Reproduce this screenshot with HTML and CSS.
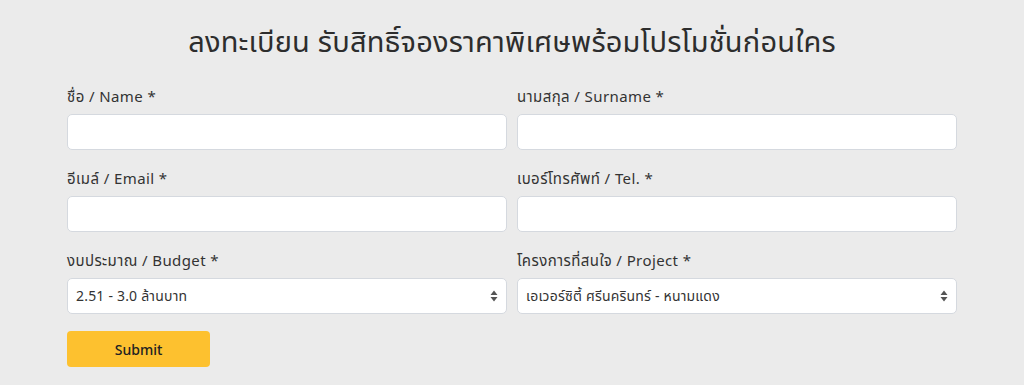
FILE: index.html
```html
<!DOCTYPE html>
<html lang="th">
<head>
<meta charset="utf-8">
<link rel="stylesheet" href="styles.css">
</head>
<body>
<div class="page">
  <h1 class="title">ลงทะเบียน รับสิทธิ์จองราคาพิเศษพร้อมโปรโมชั่นก่อนใคร</h1>
  <form class="form">
    <div class="grid">
      <div class="field">
        <label class="label">ชื่อ / Name *</label>
        <input class="input" type="text">
      </div>
      <div class="field">
        <label class="label">นามสกุล / Surname *</label>
        <input class="input" type="text">
      </div>
      <div class="field">
        <label class="label">อีเมล์ / Email *</label>
        <input class="input" type="text">
      </div>
      <div class="field">
        <label class="label">เบอร์โทรศัพท์ / Tel. *</label>
        <input class="input" type="text">
      </div>
      <div class="field">
        <label class="label">งบประมาณ / Budget *</label>
        <div class="select">
          <span class="select-text">2.51 - 3.0 ล้านบาท</span>
          <svg class="arrows" width="8" height="12" viewBox="0 0 8 12"><path d="M4 0.5 L7.5 5 H0.5 Z M4 11.5 L7.5 7 H0.5 Z" fill="#555"/></svg>
        </div>
      </div>
      <div class="field">
        <label class="label">โครงการที่สนใจ / Project *</label>
        <div class="select">
          <span class="select-text">เอเวอร์ซิตี้ ศรีนครินทร์ - หนามแดง</span>
          <svg class="arrows" width="8" height="12" viewBox="0 0 8 12"><path d="M4 0.5 L7.5 5 H0.5 Z M4 11.5 L7.5 7 H0.5 Z" fill="#555"/></svg>
        </div>
      </div>
    </div>
    <button class="submit" type="button">Submit</button>
  </form>
</div>
</body>
</html>
```
FILE: styles.css
```css
html, body {
  margin: 0;
  padding: 0;
  background: #ebebeb;
}
body {
  font-family: "Noto Sans", "Noto Sans Thai", "Open Sans", sans-serif;
  color: #333;
}
.page {
  width: 890px;
  margin: 0 auto;
  padding-top: 21px;
}
.title {
  margin: 0 0 24px;
  text-align: center;
  font-size: 29px;
  font-weight: 400;
  letter-spacing: 0.2px;
  line-height: 40px;
  color: #2d2d2d;
}
.grid {
  display: grid;
  grid-template-columns: 440px 440px;
  column-gap: 10px;
  row-gap: 17px;
}
.field {
  display: flex;
  flex-direction: column;
}
.label {
  font-size: 15px;
  letter-spacing: 0.4px;
  line-height: 22px;
  margin-bottom: 7px;
  color: #333;
}
.input, .select {
  box-sizing: border-box;
  height: 36px;
  border: 1px solid #d5d9df;
  border-radius: 5px;
  background: #fff;
  margin: 0;
  padding: 0 8px;
  font: inherit;
}
.select {
  display: flex;
  align-items: center;
  justify-content: space-between;
  font-size: 14px;
  letter-spacing: 0.2px;
  color: #333;
}
.submit {
  display: block;
  margin-top: 17px;
  width: 143px;
  height: 36px;
  border: none;
  border-radius: 4px;
  background: #fdc12f;
  font: inherit;
  font-size: 14px;
  font-weight: 500;
  color: #222;
}
```
